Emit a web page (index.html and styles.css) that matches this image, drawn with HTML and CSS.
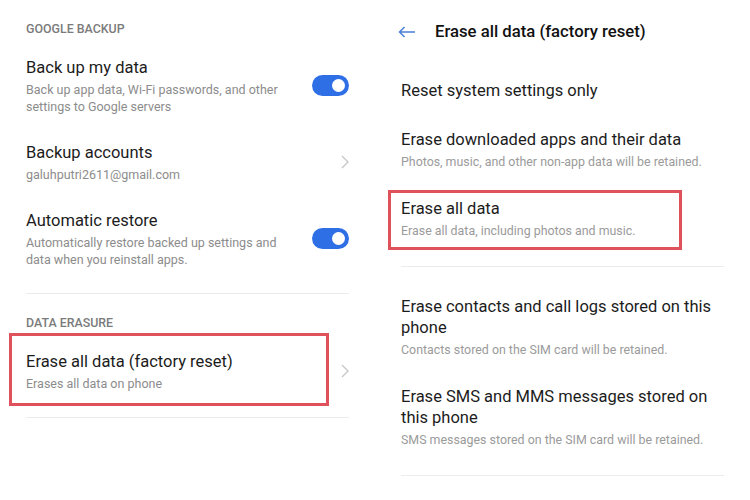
FILE: index.html
```html
<!DOCTYPE html>
<html>
<head>
  <title>Backup &amp; reset</title>
  <link rel="stylesheet" href="styles.css">
</head>
<body>

  <div class="screens">

    <!-- backup & reset settings -->
    <section class="panel panel-left">
      <div class="group-label">GOOGLE BACKUP</div>

      <div class="item">
        <div class="item-text">
          <div class="item-title">Back up my data</div>
          <div class="item-sub">Back up app data, Wi-Fi passwords, and other settings to Google servers</div>
        </div>
        <span class="toggle on"></span>
      </div>

      <div class="item">
        <div class="item-text">
          <div class="item-title">Backup accounts</div>
          <div class="item-sub">galuhputri2611@gmail.com</div>
        </div>
        <svg class="chevron" width="8" height="14" viewBox="0 0 8 14"><path d="M1 1l6 6-6 6" /></svg>
      </div>

      <div class="item">
        <div class="item-text">
          <div class="item-title">Automatic restore</div>
          <div class="item-sub">Automatically restore backed up settings and data when you reinstall apps.</div>
        </div>
        <span class="toggle on"></span>
      </div>

      <div class="divider"></div>

      <div class="group-label">DATA ERASURE</div>

      <div class="item">
        <div class="item-text">
          <div class="item-title">Erase all data (factory reset)</div>
          <div class="item-sub">Erases all data on phone</div>
        </div>
        <svg class="chevron" width="8" height="14" viewBox="0 0 8 14"><path d="M1 1l6 6-6 6" /></svg>
        <span class="highlight highlight-left"></span>
      </div>

      <div class="divider"></div>
    </section>

    <!-- factory reset options -->
    <section class="panel panel-right">
      <div class="topbar">
        <svg class="back" width="18" height="12" viewBox="0 0 18 12"><path d="M17 6H1.5M6.5 1L1.5 6l5 5" /></svg>
        <h1>Erase all data (factory reset)</h1>
      </div>

      <div class="option">
        <div class="option-title">Reset system settings only</div>
      </div>

      <div class="option">
        <div class="option-title">Erase downloaded apps and their data</div>
        <div class="option-sub">Photos, music, and other non-app data will be retained.</div>
      </div>

      <div class="option">
        <div class="option-title">Erase all data</div>
        <div class="option-sub">Erase all data, including photos and music.</div>
        <span class="highlight highlight-right"></span>
      </div>

      <div class="divider wide"></div>

      <div class="option">
        <div class="option-title">Erase contacts and call logs stored on this phone</div>
        <div class="option-sub">Contacts stored on the SIM card will be retained.</div>
      </div>

      <div class="option">
        <div class="option-title">Erase SMS and MMS messages stored on this phone</div>
        <div class="option-sub">SMS messages stored on the SIM card will be retained.</div>
      </div>

      <div class="divider wide"></div>
    </section>

  </div>

</body>
</html>
```

FILE: styles.css
```css
body {
  margin: 0;
  font-family: Roboto, "Noto Sans", sans-serif;
  background: #fff;
  color: #1c1c1c;
}

.screens {
  display: flex;
  width: 750px;
  height: 500px;
  overflow: hidden;
}

.panel {
  width: 375px;
  padding: 0 26px;
  box-sizing: border-box;
}

.panel-left {
  padding-top: 21px;
}

/* left screen */

.group-label {
  font-size: 12.4px;
  line-height: 16px;
  font-weight: 500;
  color: #7b7b7b;
  margin-bottom: 6px;
}

.item {
  position: relative;
  display: flex;
  align-items: center;
  padding: 13.5px 0;
}

.item-text {
  flex: 1;
  min-width: 0;
  padding-right: 12px;
}

.item-title {
  font-size: 16.5px;
  line-height: 21px;
}

.item-sub {
  font-size: 12.5px;
  line-height: 17px;
  color: #8c8c8c;
  margin-top: 3px;
}

.toggle {
  position: relative;
  width: 37px;
  height: 21px;
  border-radius: 11px;
  background: #2f6fe6;
  flex-shrink: 0;
}

.toggle::after {
  content: "";
  position: absolute;
  top: 4px;
  right: 4px;
  width: 13px;
  height: 13px;
  border-radius: 50%;
  background: #fff;
}

.chevron {
  flex-shrink: 0;
  fill: none;
  stroke: #c8c8c8;
  stroke-width: 1.4;
}

.divider {
  height: 1px;
  background: #ececec;
  margin: 12px 0 21px;
}

/* red annotation boxes */

.highlight {
  position: absolute;
  box-sizing: border-box;
  border: 3px solid #df525c;
  pointer-events: none;
}

.highlight-left {
  left: -17px;
  top: -4px;
  width: 320px;
  height: 73px;
}

.highlight-right {
  left: -13px;
  top: 5.5px;
  width: 294px;
  height: 60px;
}

/* right screen */

.topbar {
  display: flex;
  align-items: center;
  padding: 21px 0 24px;
}

.back {
  margin-left: -3px;
  margin-right: 19px;
  fill: none;
  stroke: #4a80d8;
  stroke-width: 1.5;
}

.topbar h1 {
  margin: 0;
  font-size: 16.7px;
  line-height: 21px;
  font-weight: 500;
  color: #111;
}

.option {
  position: relative;
  padding: 14px 0;
}

.option-title {
  font-size: 16.5px;
  line-height: 21px;
}

.option-sub {
  font-size: 12.4px;
  line-height: 16px;
  color: #9b9b9b;
  margin-top: 4px;
}

.divider.wide {
  margin: 13px 0 15px;
}
```
